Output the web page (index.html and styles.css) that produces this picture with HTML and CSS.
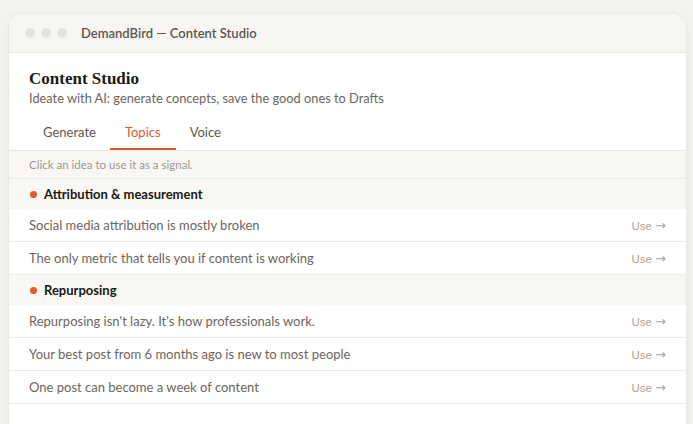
FILE: index.html
```html
<!DOCTYPE html>
<html lang="en">
<head>
<meta charset="utf-8">
<title>DemandBird — Content Studio</title>
<link rel="stylesheet" href="styles.css">
</head>
<body>
<div class="stage">
  <div class="window">
    <div class="titlebar">
      <div class="dots"><span class="dot"></span><span class="dot"></span><span class="dot"></span></div>
      <div class="wtitle">DemandBird — Content Studio</div>
    </div>
    <div class="head">
      <h1 class="h1">Content Studio</h1>
      <p class="sub">Ideate with AI: generate concepts, save the good ones to Drafts</p>
    </div>
    <nav class="tabs">
      <span class="tab">Generate</span>
      <span class="tab active">Topics</span>
      <span class="tab">Voice</span>
    </nav>
    <div class="hint">Click an idea to use it as a signal.</div>
    <div class="group"><span class="gdot"></span>Attribution &amp; measurement</div>
    <div class="row"><span class="rtext">Social media attribution is mostly broken</span><span class="use">Use <span class="arrow">→</span></span></div>
    <div class="row"><span class="rtext">The only metric that tells you if content is working</span><span class="use">Use <span class="arrow">→</span></span></div>
    <div class="group"><span class="gdot"></span>Repurposing</div>
    <div class="row"><span class="rtext">Repurposing isn't lazy. It's how professionals work.</span><span class="use">Use <span class="arrow">→</span></span></div>
    <div class="row"><span class="rtext">Your best post from 6 months ago is new to most people</span><span class="use">Use <span class="arrow">→</span></span></div>
    <div class="row"><span class="rtext">One post can become a week of content</span><span class="use">Use <span class="arrow">→</span></span></div>
  </div>
</div>
</body>
</html>
```
FILE: styles.css
```css
html, body { margin: 0; padding: 0; }
body {
  background: #f4f3f0;
  font-family: "Lato", "DejaVu Sans", sans-serif;
  width: 693px;
  height: 424px;
  overflow: hidden;
}
.stage {
  padding: 14px 7px 0 9px;
}
.window {
  background: #ffffff;
  border-radius: 14px;
  box-shadow: 0 0 0 1px #ebe9e4, 0 4px 14px rgba(0,0,0,0.05);
  height: 420px;
  overflow: hidden;
}
.titlebar {
  height: 38px;
  background: #f7f6f3;
  border-bottom: 1px solid #ebe9e4;
  display: flex;
  align-items: center;
  padding-left: 16px;
}
.dots { display: flex; gap: 6px; margin-right: 14px; }
.dot { width: 10px; height: 10px; border-radius: 50%; background: #e4e3de; }
.wtitle { font-size: 13px; font-weight: 600; color: #5b5750; }
.head { padding: 15px 20px 0; }
.h1 {
  margin: 0;
  font-family: "Liberation Serif", "DejaVu Serif", serif;
  font-weight: 700;
  font-size: 17px;
  line-height: 21px;
  color: #1c1a17;
}
.sub {
  margin: 0;
  font-size: 12.8px;
  line-height: 18px;
  color: #6b665e;
}
.tabs {
  display: flex;
  padding: 0 20px;
  margin-top: 10px;
  border-bottom: 1px solid #ebe9e4;
}
.tab {
  font-size: 13px;
  color: #5b5750;
  padding: 0 14px;
  height: 33px;
  line-height: 31px;
  box-sizing: border-box;
}
.tab.active {
  color: #e05a2b;
  padding: 0 15px;
  border-bottom: 2px solid #e05a2b;
}
.hint {
  background: #f8f7f4;
  font-size: 11.5px;
  color: #9d988f;
  height: 27px;
  line-height: 27px;
  padding-left: 20px;
  border-bottom: 1px solid #ebe9e4;
}
.group {
  background: #f8f7f4;
  height: 30px;
  display: flex;
  align-items: center;
  padding-left: 20px;
  font-size: 13px;
  font-weight: 700;
  color: #1a1815;
}
.gdot {
  width: 7px; height: 7px; border-radius: 50%;
  background: #e05a2b;
  margin: 0 7px 0 1px;
}
.row {
  height: 32px;
  display: flex;
  align-items: center;
  justify-content: space-between;
  padding: 0 20px;
  border-bottom: 1px solid #eeece8;
  font-size: 13px;
  color: #6b665e;
}
.use {
  font-family: "Liberation Sans", Arial, sans-serif;
  font-size: 11.5px;
  color: #a9a49c;
}
.arrow {
  font-family: "DejaVu Sans", sans-serif;
  font-size: 13px;
}
```
